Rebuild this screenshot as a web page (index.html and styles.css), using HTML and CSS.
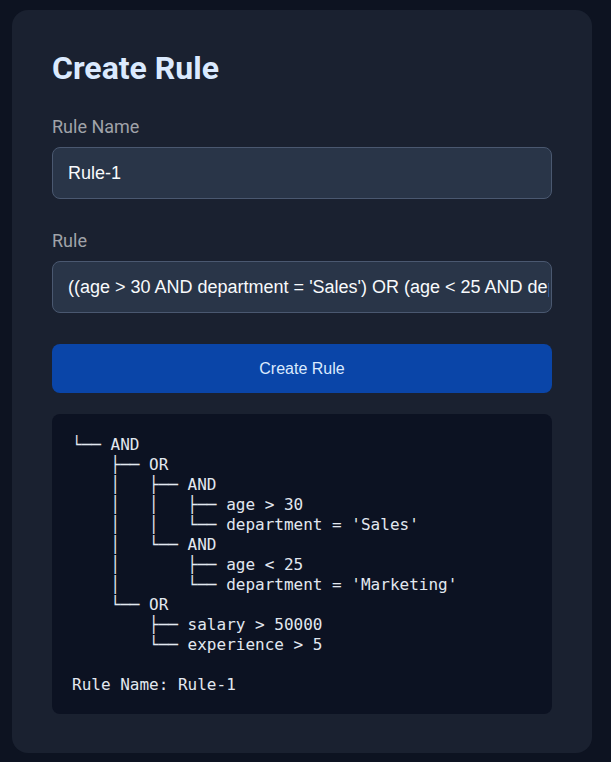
FILE: index.html
```html
<!DOCTYPE html>
<html lang="en">
<head>
<meta charset="utf-8">
<title>Create Rule</title>
<link rel="stylesheet" href="styles.css">
</head>
<body>
<main class="card">
  <h1 class="title">Create Rule</h1>
  <label class="label" for="rule-name">Rule Name</label>
  <input class="field" id="rule-name" type="text" value="Rule-1">
  <label class="label label-rule" for="rule">Rule</label>
  <input class="field" id="rule" type="text" value="((age > 30 AND department = 'Sales') OR (age < 25 AND department = 'Marketing')) AND (salary > 50000 OR experience > 5)">
  <button class="btn" type="button">Create Rule</button>
  <pre class="output">└── AND
    ├── OR
    │   ├── AND
    │   │   ├── age &gt; 30
    │   │   └── department = 'Sales'
    │   └── AND
    │       ├── age &lt; 25
    │       └── department = 'Marketing'
    └── OR
        ├── salary &gt; 50000
        └── experience &gt; 5

Rule Name: Rule-1</pre>
</main>
</body>
</html>
```

FILE: styles.css
```css
html, body {
  margin: 0;
  background: #0d1321;
}
body {
  padding: 10px 12px;
  font-family: Roboto, "Liberation Sans", Arial, sans-serif;
}
.card {
  width: 580px;
  box-sizing: border-box;
  background: #1a2130;
  border-radius: 16px;
  padding: 40px 40px 39px;
  display: flex;
  flex-direction: column;
}
.title {
  margin: 0 0 29px;
  font-size: 32px;
  line-height: 36px;
  font-weight: 700;
  color: #dbeafe;
}
.label {
  font-size: 18px;
  line-height: 24px;
  color: #a0a3a9;
  margin-bottom: 8px;
}
.label-rule {
  margin-top: 30px;
}
.field {
  height: 52px;
  box-sizing: border-box;
  padding: 0 2px 0 15px;
  border: 1px solid #4a5870;
  border-radius: 8px;
  background: #293548;
  color: #f8fafc;
  font-family: "Liberation Sans", Arial, sans-serif;
  font-size: 18px;
  outline: none;
}
.btn {
  margin-top: 31px;
  height: 49px;
  border: none;
  border-radius: 8px;
  background: #0a45a8;
  color: #dbeafe;
  font-family: "Liberation Sans", Arial, sans-serif;
  font-size: 16px;
}
.output {
  margin: 21px 0 0;
  padding: 21px 20px 19px;
  background: #0c1222;
  border-radius: 8px;
  color: #e2e8f0;
  font-family: "DejaVu Sans Mono", "Liberation Mono", monospace;
  font-size: 16px;
  line-height: 20px;
}
```
